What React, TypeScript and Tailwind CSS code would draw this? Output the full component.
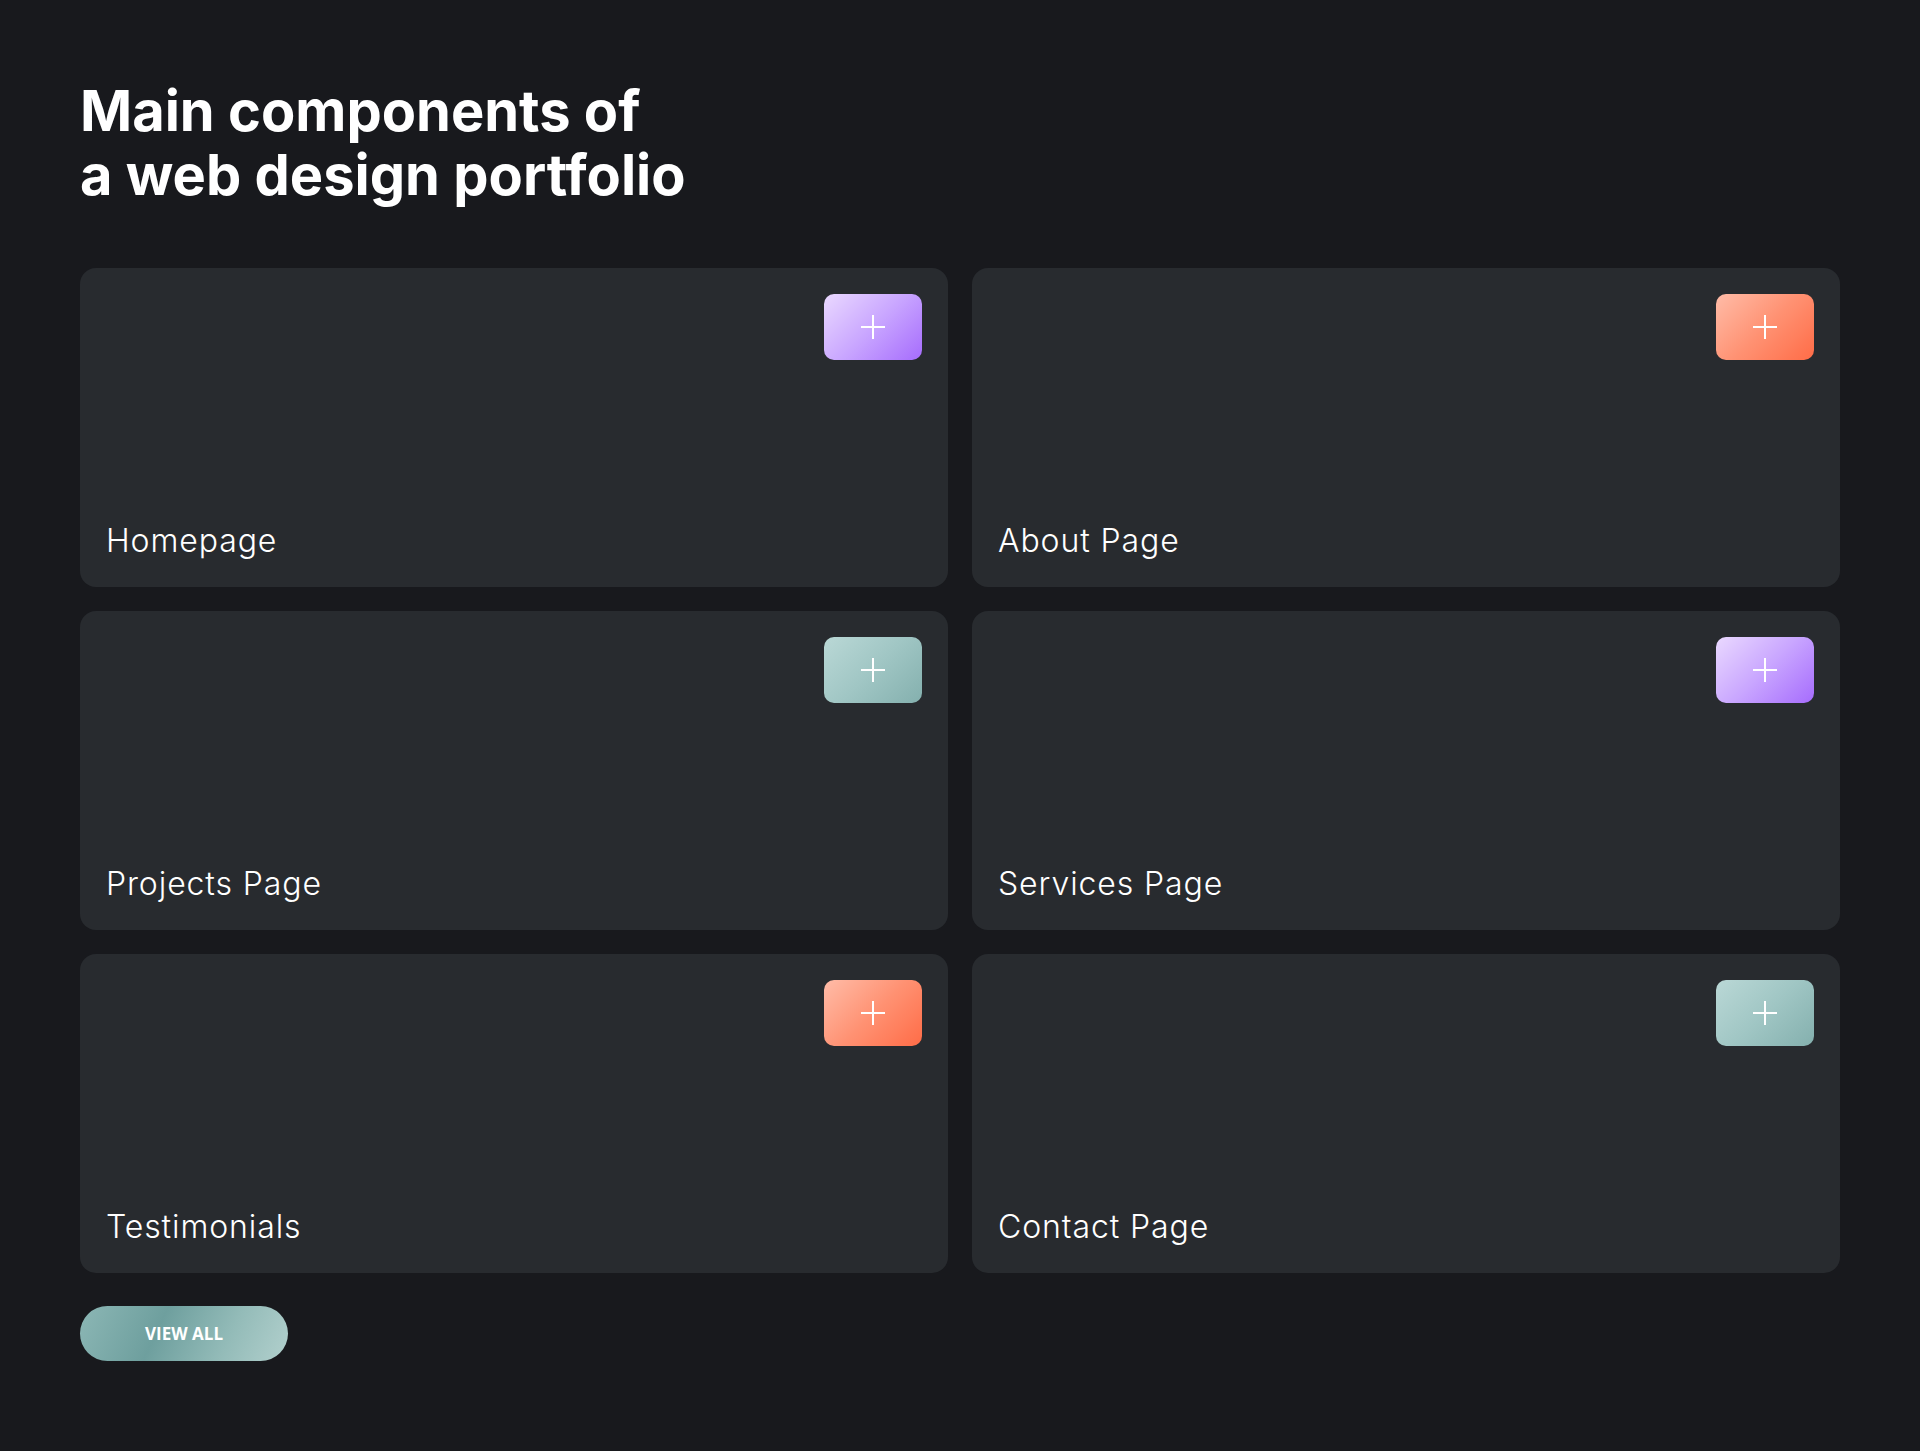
import React from "react";

type Variant = "purple" | "orange" | "teal";

const gradients: Record<Variant, string> = {
  purple: "bg-[linear-gradient(135deg,#ead9ff_0%,#c9a6ff_50%,#a66cfd_100%)]",
  orange: "bg-[linear-gradient(135deg,#ffbca8_0%,#ff9273_50%,#ff6c47_100%)]",
  teal: "bg-[linear-gradient(135deg,#bad8d6_0%,#a0c6c4_50%,#84b0ae_100%)]",
};

const items: { label: string; variant: Variant }[] = [
  { label: "Homepage", variant: "purple" },
  { label: "About Page", variant: "orange" },
  { label: "Projects Page", variant: "teal" },
  { label: "Services Page", variant: "purple" },
  { label: "Testimonials", variant: "orange" },
  { label: "Contact Page", variant: "teal" },
];

function PlusBox({ variant }: { variant: Variant }) {
  return (
    <div
      className={`flex h-[66px] w-[98px] items-center justify-center rounded-[10px] ${gradients[variant]}`}
    >
      <svg width="24" height="24" viewBox="0 0 24 24" fill="none" shapeRendering="crispEdges">
        <path d="M12 0V24M0 12H24" stroke="#ffffff" strokeWidth="2.5" />
      </svg>
    </div>
  );
}

export default function App() {
  return (
    <div className="min-h-[1451px] w-full bg-[#18191d] px-20 pt-[79px] font-['Inter',sans-serif]">
      <h1 className="text-[56px] font-bold leading-[64px] tracking-normal text-white">
        Main components of
        <br />
        a web design portfolio
      </h1>
      <div className="mt-[61px] grid grid-cols-2 gap-6">
        {items.map((it) => (
          <div
            key={it.label}
            className="flex h-[319px] flex-col justify-between rounded-2xl bg-[#282b2f] p-[26px] pl-[26px]"
          >
            <div className="flex justify-end">
              <PlusBox variant={it.variant} />
            </div>
            <div className="font-['Inter',sans-serif] text-[32px] font-light leading-[40px] tracking-[0.9px] text-white">
              {it.label}
            </div>
          </div>
        ))}
      </div>
      <button className="mt-[33px] flex h-[55px] w-[208px] items-center justify-center rounded-full bg-[linear-gradient(115deg,#8cb7b5_0%,#6e9f9e_38%,#93bbb8_70%,#b2d0cd_100%)] font-['Open_Sans',sans-serif] text-[17px] font-bold text-white">
        VIEW ALL
      </button>
    </div>
  );
}
